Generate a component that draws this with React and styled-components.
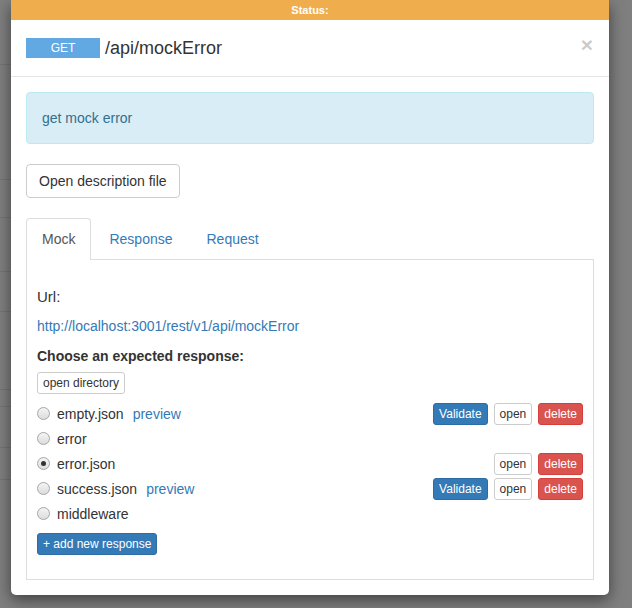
import React, { useState } from 'react'
import styled, { createGlobalStyle } from 'styled-components'

const GlobalStyle = createGlobalStyle`
  html, body {
    margin: 0;
    padding: 0;
    background: #7f7f7f;
    font-family: "Liberation Sans", Arial, sans-serif;
    font-size: 14px;
    color: #333;
  }
  * { box-sizing: border-box; }
`;

const responses = [
  { name: 'empty.json', preview: true, validate: true, open: true, del: true },
  { name: 'error' },
  { name: 'error.json', open: true, del: true },
  { name: 'success.json', preview: true, validate: true, open: true, del: true },
  { name: 'middleware' },
];

// rows of the page that lies under the backdrop
const pageRows = [65, 115, 38, 54, 40, 78, 17, 41, 32, 169];

const App = () => {
  const [selected, setSelected] = useState('error.json');
  const [tab, setTab] = useState('Mock');

  return (
    <>
      <GlobalStyle />
      <Page>
        {pageRows.map((h, i) => (
          <PageRow key={i} h={h} />
        ))}
      </Page>
      <Modal>
        <StatusBar>Status:</StatusBar>
        <Header>
          <Method>GET</Method>
          <Title>/api/mockError</Title>
          <Close>×</Close>
        </Header>
        <Body>
          <Alert>get mock error</Alert>
          <DefaultButton>Open description file</DefaultButton>
          <Tabs>
            {['Mock', 'Response', 'Request'].map((t) => (
              <Tab key={t} active={tab === t} onClick={() => setTab(t)}>
                {t}
              </Tab>
            ))}
          </Tabs>
          <TabContent>
            <Label>Url:</Label>
            <Link>http://localhost:3001/rest/v1/api/mockError</Link>
            <Heading>Choose an expected response:</Heading>
            <SmallButton variant="default">open directory</SmallButton>
            <List>
              {responses.map((r) => (
                <Row key={r.name}>
                  <Choice onClick={() => setSelected(r.name)}>
                    <Radio checked={selected === r.name} />
                    <span>{r.name}</span>
                    {r.preview && <Preview>preview</Preview>}
                  </Choice>
                  <Actions>
                    {r.validate && <SmallButton variant="primary">Validate</SmallButton>}
                    {r.open && <SmallButton variant="default">open</SmallButton>}
                    {r.del && <SmallButton variant="danger">delete</SmallButton>}
                  </Actions>
                </Row>
              ))}
            </List>
            <AddButton variant="primary">+ add new response</AddButton>
          </TabContent>
        </Body>
      </Modal>
    </>
  );
};

const Page = styled.div`
  display: flex;
  flex-direction: column;
  width: 590px;
  height: 608px;
  overflow: hidden;
`;

const PageRow = styled.div`
  height: ${(p) => p.h}px;
  flex: none;
  border-bottom: 1px solid #747474;
`;

const Modal = styled.div`
  position: absolute;
  top: 0;
  left: 11px;
  width: 598px;
  background: #fff;
  border-radius: 0 0 5px 5px;
  box-shadow: 0 5px 15px rgba(0, 0, 0, 0.5);
`;

const StatusBar = styled.div`
  height: 20px;
  background: #f0ad4e;
  color: #fff;
  font-size: 11px;
  font-weight: bold;
  text-align: center;
  line-height: 20px;
`;

const Header = styled.div`
  display: flex;
  align-items: center;
  height: 57px;
  padding: 0 15px;
  border-bottom: 1px solid #e5e5e5;
`;

const Method = styled.span`
  width: 74px;
  height: 20px;
  line-height: 20px;
  background: #62a9e3;
  color: #fff;
  font-size: 12px;
  text-align: center;
`;

const Title = styled.h4`
  margin: 0 0 0 5px;
  font-size: 18px;
  font-weight: normal;
  color: #333;
  flex: 1;
`;

const Close = styled.span`
  font-size: 21px;
  font-weight: bold;
  color: #000;
  opacity: 0.2;
  line-height: 1;
  margin-right: 1px;
  margin-top: -7px;
`;

const Body = styled.div`
  padding: 15px 15px 15px;
  display: flex;
  flex-direction: column;
  align-items: flex-start;
`;

const Alert = styled.div`
  align-self: stretch;
  padding: 15px;
  line-height: 20px;
  background: #d9edf7;
  border: 1px solid #bce8f1;
  border-radius: 4px;
  color: #31708f;
  margin-bottom: 20px;
`;

const DefaultButton = styled.button`
  font-family: inherit;
  font-size: 14px;
  color: #333;
  background: #fff;
  border: 1px solid #ccc;
  border-radius: 4px;
  padding: 6px 12px;
  line-height: 20px;
  height: 34px;
  margin-bottom: 20px;
`;

const Tabs = styled.div`
  display: flex;
  align-self: stretch;
`;

const Tab = styled.a`
  padding: 10px 15px;
  line-height: 20px;
  margin-right: 2px;
  color: ${(p) => (p.active ? '#555' : '#337ab7')};
  background: ${(p) => (p.active ? '#fff' : 'transparent')};
  border: 1px solid ${(p) => (p.active ? '#ddd' : 'transparent')};
  border-bottom: none;
  border-radius: 4px 4px 0 0;
  margin-bottom: -1px;
  position: relative;
  height: 42px;
  cursor: pointer;
`;

const TabContent = styled.div`
  align-self: stretch;
  border: 1px solid #ddd;
  padding: 27px 10px 24px;
  display: flex;
  flex-direction: column;
  align-items: flex-start;
`;

const Label = styled.div`
  font-size: 15px;
  line-height: 20px;
  margin-bottom: 9px;
`;

const Link = styled.a`
  color: #337ab7;
  line-height: 20px;
  margin-bottom: 10px;
`;

const Heading = styled.div`
  font-weight: bold;
  line-height: 20px;
  margin-bottom: 6px;
`;

const colors = {
  default: { bg: '#fff', border: '#ccc', color: '#333' },
  primary: { bg: '#337ab7', border: '#2e6da4', color: '#fff' },
  danger: { bg: '#d9534f', border: '#d43f3a', color: '#fff' },
};

const SmallButton = styled.button`
  font-family: inherit;
  font-size: 12px;
  line-height: 18px;
  padding: 1px 5px;
  height: 22px;
  border-radius: 3px;
  border: 1px solid ${(p) => colors[p.variant].border};
  background: ${(p) => colors[p.variant].bg};
  color: ${(p) => colors[p.variant].color};
`;

const List = styled.div`
  align-self: stretch;
  margin-top: 7px;
  display: flex;
  flex-direction: column;
`;

const Row = styled.div`
  display: flex;
  align-items: center;
  justify-content: space-between;
  height: 25px;
`;

const Choice = styled.label`
  display: flex;
  align-items: center;
  gap: 6px;
  line-height: 20px;
  cursor: pointer;
`;

const Radio = styled.span`
  width: 13px;
  height: 13px;
  border-radius: 50%;
  border: 1px solid #a6a6a6;
  background: linear-gradient(#f4f4f4, #dcdcdc);
  display: inline-flex;
  align-items: center;
  justify-content: center;
  margin-right: 1px;
  &::after {
    content: '';
    display: ${(p) => (p.checked ? 'block' : 'none')};
    width: 5px;
    height: 5px;
    border-radius: 50%;
    background: #333;
  }
`;

const Preview = styled.span`
  color: #337ab7;
  margin-left: 3px;
`;

const Actions = styled.div`
  display: flex;
  gap: 6px;
`;

const AddButton = styled(SmallButton)`
  margin-top: 7px;
`;

export default App;
